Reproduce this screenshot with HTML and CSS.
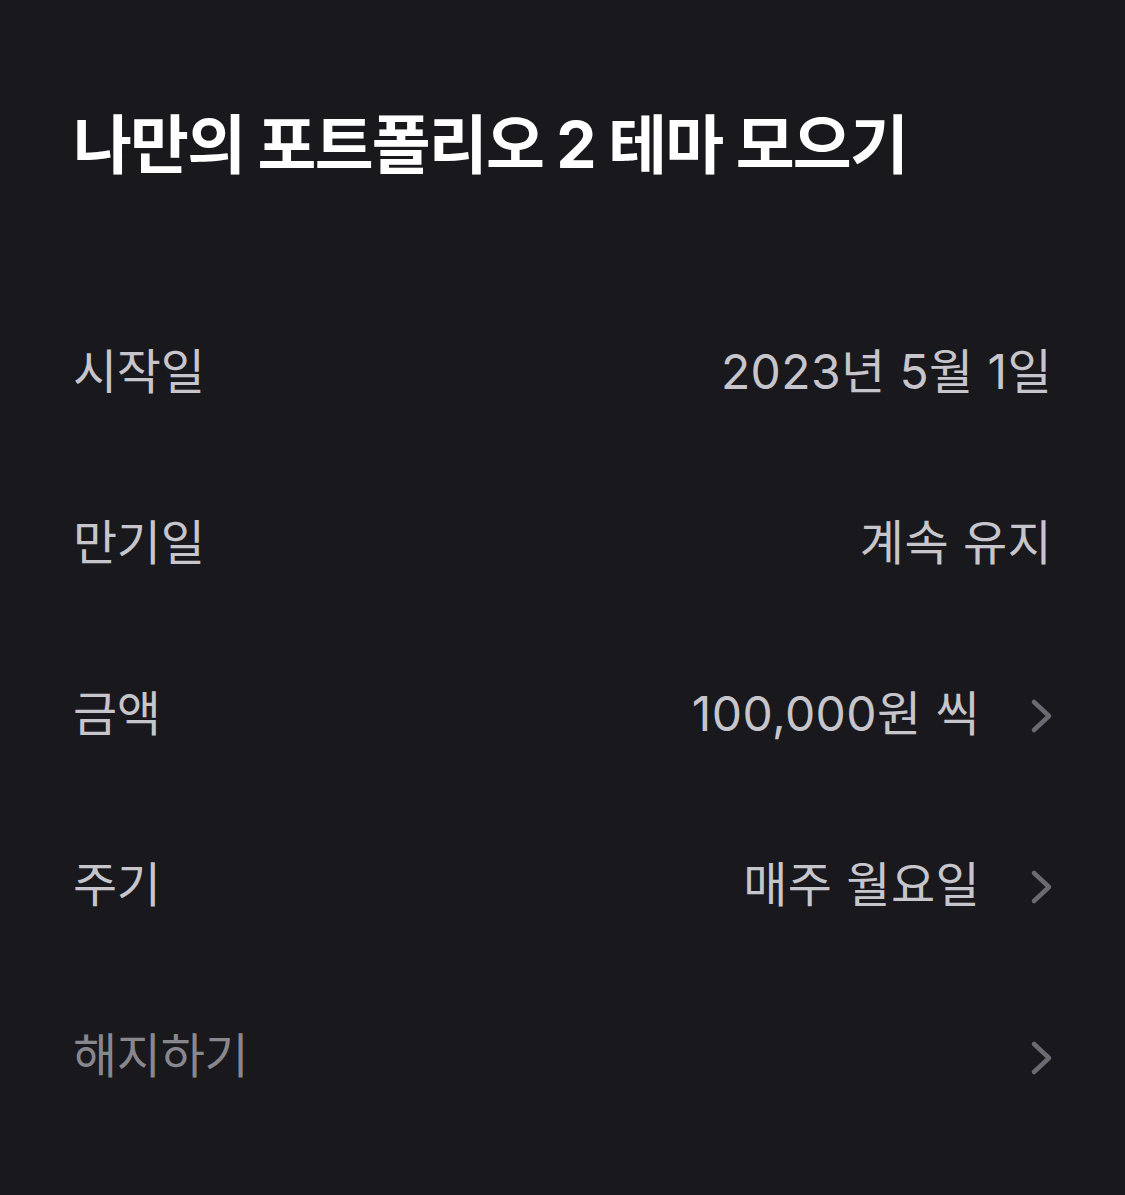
FILE: index.html
```html
<!DOCTYPE html>
<html lang="ko">
<head>
  <meta charset="UTF-8">
  <meta name="viewport" content="width=device-width, initial-scale=1.0">
  <title>나만의 포트폴리오 2 테마 모으기</title>
  <link rel="stylesheet" href="styles.css">
</head>
<body>
  <div class="container">
    <h1 class="title">나만의 포트폴리오 2 테마 모으기</h1>

    <ul class="info-list">
      <li class="info-row">
        <span class="label">시작일</span>
        <span class="value">2023년 5월 1일</span>
      </li>
      <li class="info-row">
        <span class="label">만기일</span>
        <span class="value">계속 유지</span>
      </li>
      <li class="info-row link">
        <span class="label">금액</span>
        <span class="value">100,000원 씩</span>
        <svg class="chevron" viewBox="0 0 24 36" width="24" height="36"><path d="M4 4 L19 18 L4 32"/></svg>
      </li>
      <li class="info-row link">
        <span class="label">주기</span>
        <span class="value">매주 월요일</span>
        <svg class="chevron" viewBox="0 0 24 36" width="24" height="36"><path d="M4 4 L19 18 L4 32"/></svg>
      </li>
      <li class="info-row link">
        <span class="label muted">해지하기</span>
        <svg class="chevron" viewBox="0 0 24 36" width="24" height="36"><path d="M4 4 L19 18 L4 32"/></svg>
      </li>
    </ul>
  </div>
</body>
</html>
```

FILE: styles.css
```css
body {
  font-family: 'Inter', 'Noto Sans CJK KR', sans-serif;
  background-color: #19181d;
  color: #c6c5cb;
  margin: 0;
  padding: 0;
}
.container {
  padding: 100px 73px 0 73px;
}
.title {
  font-size: 64px;
  font-weight: 700;
  color: #ffffff;
  letter-spacing: -1.8px;
  line-height: 90px;
  margin: 0;
}
.info-list {
  list-style: none;
  margin: 92px 0 0 0;
  padding: 0;
}
.info-row {
  display: flex;
  align-items: center;
  height: 171px;
  font-size: 48px;
  letter-spacing: -0.3px;
}
.label {
  flex: 1;
}
.label.muted {
  color: #88878d;
}
.value {
  text-align: right;
  letter-spacing: 0.4px;
}
.chevron {
  margin-top: 12px;
  margin-left: 50px;
  margin-right: -2px;
  fill: none;
  stroke: #6b6a72;
  stroke-width: 4.5;
  stroke-linecap: round;
  stroke-linejoin: round;
}
```
